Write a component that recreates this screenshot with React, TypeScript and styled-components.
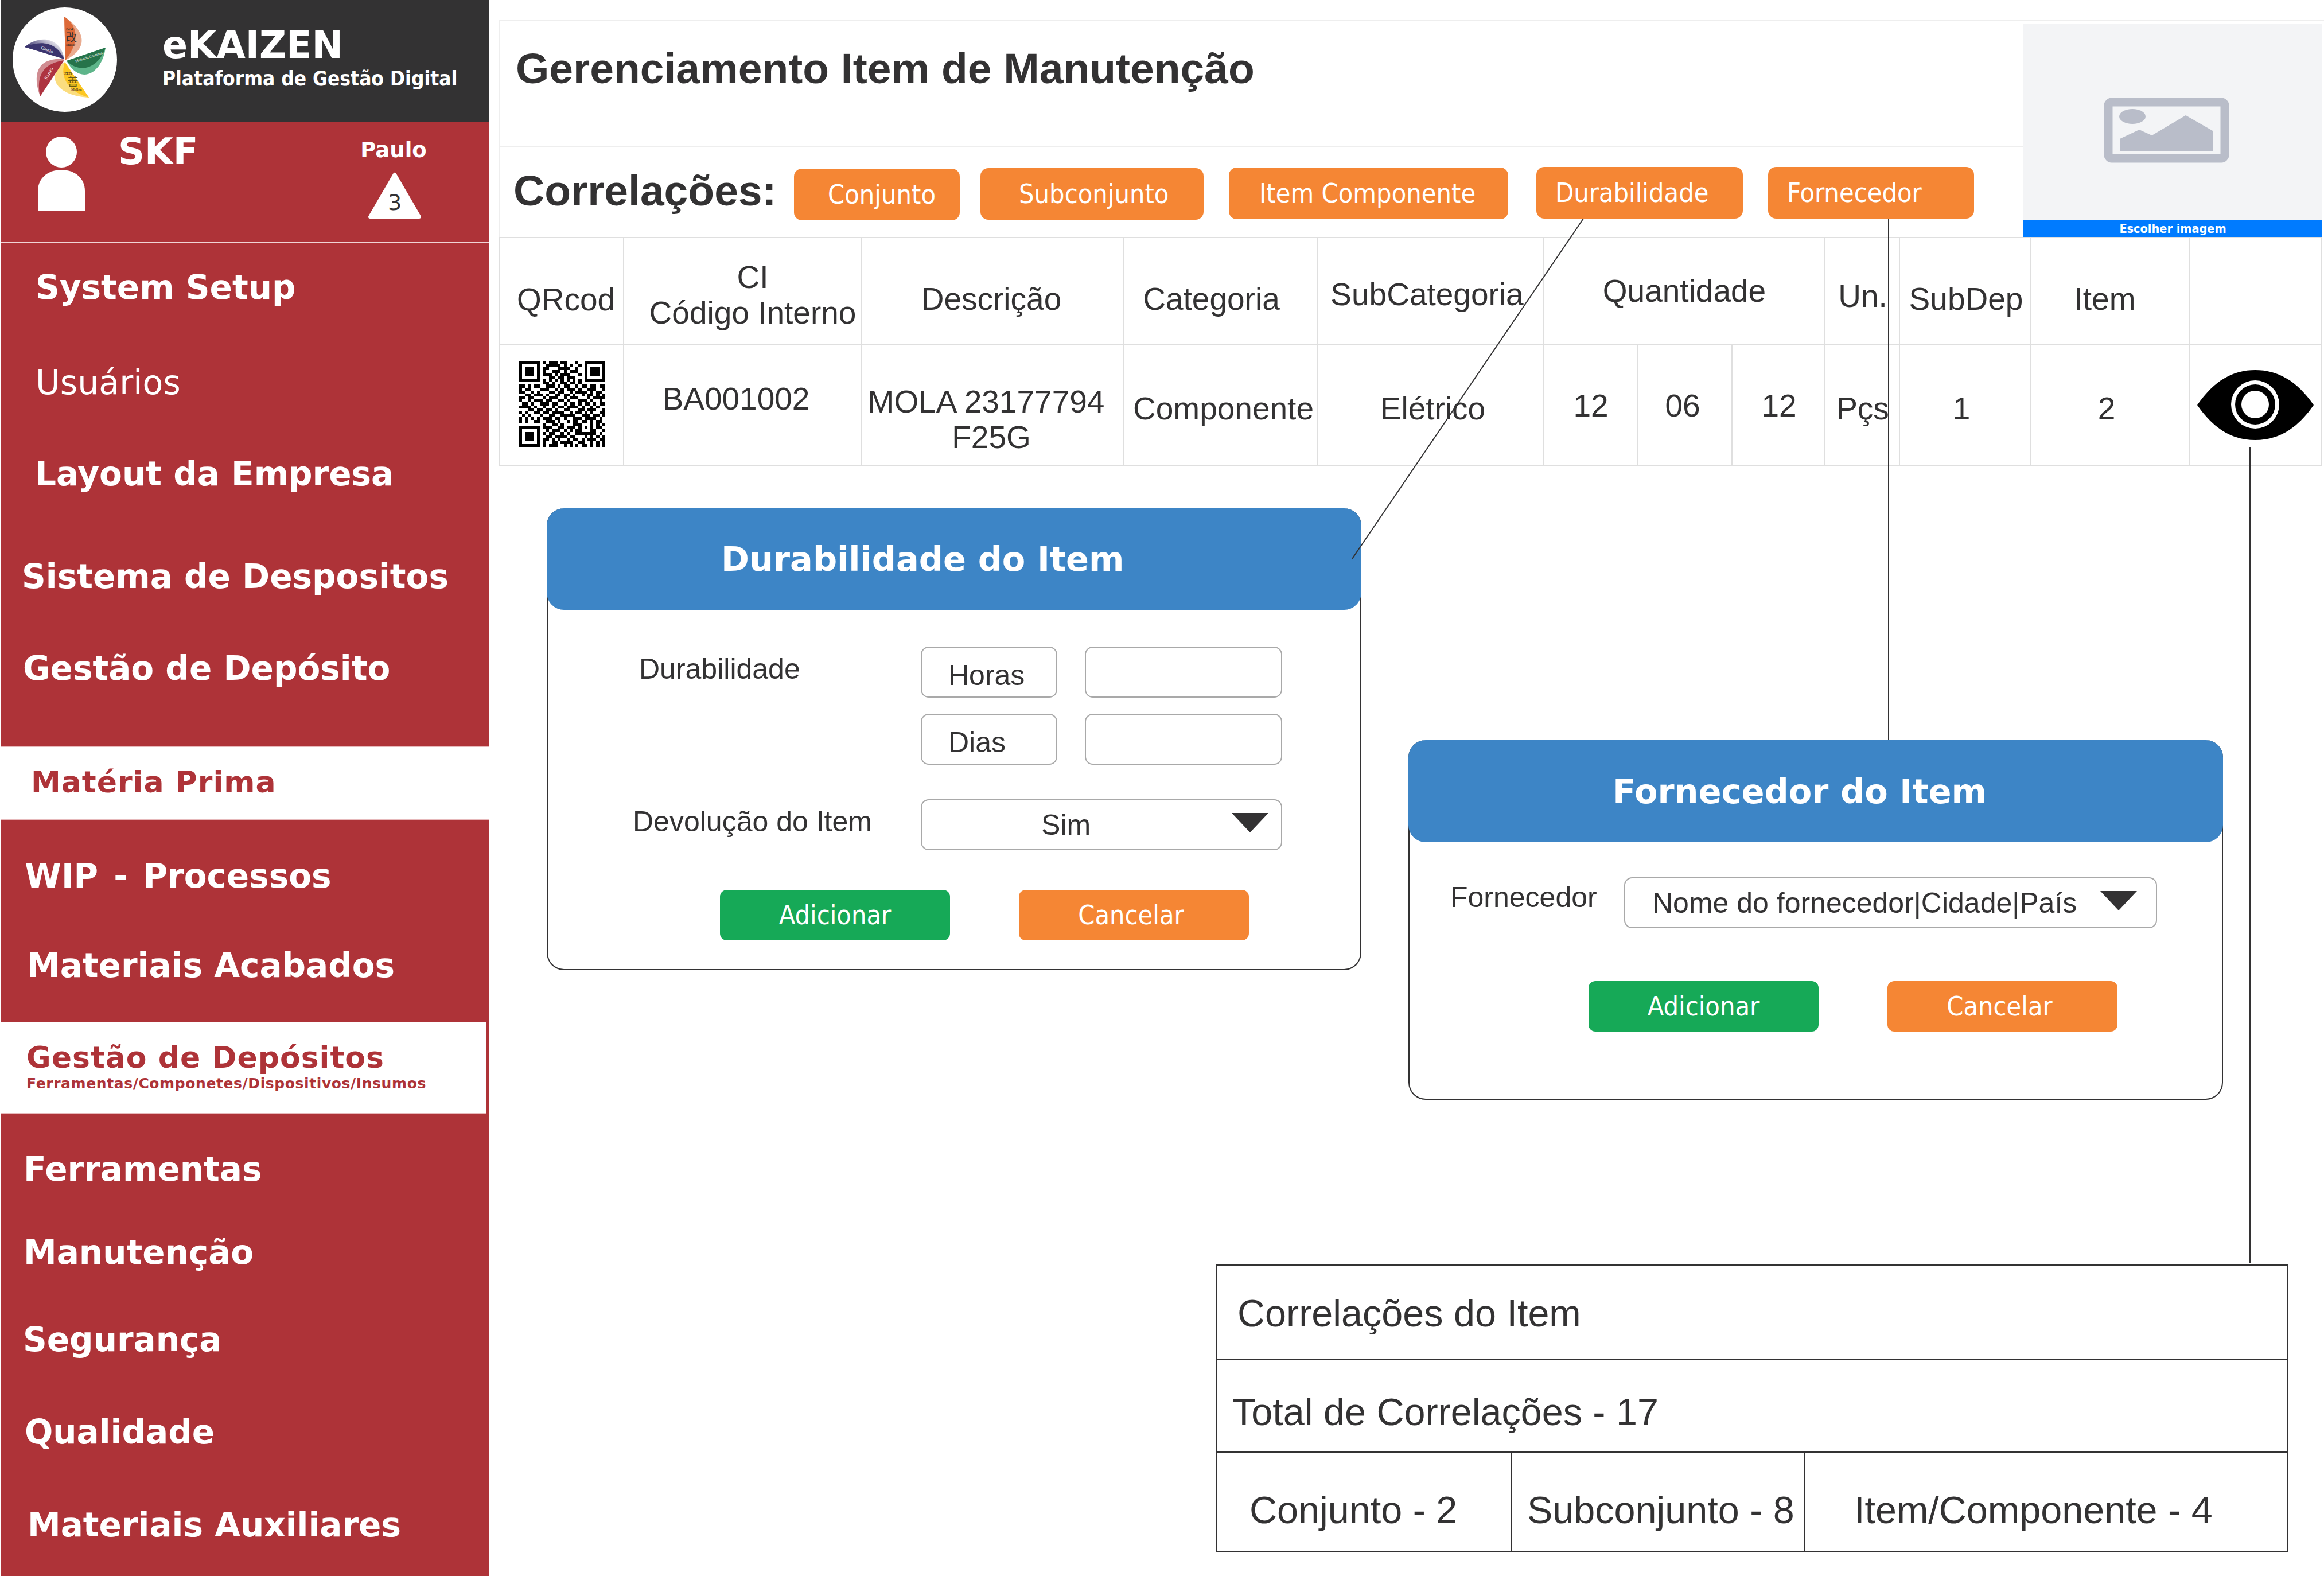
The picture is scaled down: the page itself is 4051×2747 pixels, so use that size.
import React from "react";
import styled, { createGlobalStyle } from "styled-components";

const SANS = `"Liberation Sans", Arial, sans-serif`;
const WIDE = `"DejaVu Sans", Verdana, sans-serif`;
const NARROW = `"DejaVu Sans Condensed", "DejaVu Sans", Tahoma, sans-serif`;
const RED = "#ae3338";
const INK = "#333233";
const ORANGE = "#f58634";
const GREEN = "#16a957";
const BLUE = "#3d85c6";
const GRID = "#dfdfdf";

const Global = createGlobalStyle`
  html, body { margin: 0; padding: 0; background: #fff; }
  body { width: 4051px; height: 2747px; overflow: hidden; font-family: ${SANS}; color: ${INK}; }
  * { box-sizing: border-box; }
`;

const Page = styled.div`
  display: flex;
  width: 4051px;
  height: 2747px;
  overflow: hidden;
`;

/* ---------- sidebar ---------- */
const Sidebar = styled.aside`
  flex: 0 0 851px;
  margin-left: 2px;
  height: 2747px;
  background: ${RED};
  border-right: 1px solid #e0a5a7;
  display: flex;
  flex-direction: column;
  overflow: hidden;
`;
const Brand = styled.header`
  height: 212px;
  flex: none;
  background: ${INK};
  display: flex;
  align-items: flex-start;
`;
const BrandText = styled.div`
  margin-left: 73px;
  padding-top: 40px;
  color: #fff;
  font-family: ${WIDE};
  font-weight: 700;
`;
const BrandName = styled.div`
  font-size: 65px;
  line-height: 78px;
`;
const BrandTag = styled.div`
  font-family: ${NARROW};
  font-size: 35px;
  line-height: 44px;
  margin-top: -3px;
  white-space: nowrap;
`;
const UserBar = styled.section`
  height: 212px;
  flex: none;
  display: flex;
  border-bottom: 3px solid #f0d4d5;
  color: #fff;
  font-family: ${WIDE};
  font-weight: 700;
`;
const Company = styled.div`
  font-size: 64px;
  line-height: 64px;
  margin: 20px 0 0 58px;
  width: 422px;
`;
const Operator = styled.div`
  width: 116px;
  text-align: center;
  padding-top: 26px;
  font-size: 37px;
  line-height: 48px;
  display: flex;
  flex-direction: column;
  align-items: center;
`;
const Level = styled.svg`
  width: 96px;
  height: 84px;
  margin: 14px 0 0 4px;
  display: block;
  flex: none;
`;
const Avatar = styled.svg`
  width: 82px;
  height: 130px;
  margin: 26px 0 0 64px;
  flex: none;
`;
const NavRow = styled.div<{ $h: number; $x: number; $ws?: number }>`
  flex: none;
  height: ${(p) => p.$h}px;
  padding: 4px 0 0 ${(p) => p.$x}px;
  display: flex;
  align-items: center;
  color: #fff;
  font-family: ${WIDE};
  font-weight: 700;
  font-size: 58px;
  word-spacing: ${(p) => p.$ws ?? 0}px;
  white-space: pre;
`;
const NavPlain = styled(NavRow)`
  padding-top: 0;
  font-weight: 400;
  font-size: 58.5px;
`;
const ActiveBand = styled.div<{ $top: number; $h: number; $x: number; $inset?: number }>`
  flex: none;
  margin-top: ${(p) => p.$top}px;
  margin-right: ${(p) => p.$inset ?? 0}px;
  height: ${(p) => p.$h}px;
  padding: 0 0 4px ${(p) => p.$x}px;
  background: #fff;
  border-top: 1px solid #e7b9bb;
  border-bottom: 1px solid #e7b9bb;
  color: ${RED};
  font-family: ${WIDE};
  font-weight: 700;
  display: flex;
  flex-direction: column;
  justify-content: center;
  white-space: nowrap;
`;
const BandTitle = styled.div`
  font-size: 52px;
  line-height: 58px;
  letter-spacing: 1px;
`;
const BandSub = styled.div`
  font-size: 25px;
  line-height: 30px;
  letter-spacing: 0.6px;
  margin-top: 2px;
`;

/* ---------- main ---------- */
const Main = styled.main`
  position: relative;
  flex: 1;
  margin-left: 16px;
  min-width: 0;
`;
const TopArea = styled.div`
  margin-top: 34px;
  border-top: 2px solid #eeeeee;
  height: 379px;
  display: flex;
`;
const TopLeft = styled.div`
  flex: 0 0 2657px;
  display: flex;
  flex-direction: column;
  border-left: 2px solid #eeeeee;
`;
const TitleBar = styled.div`
  height: 221px;
  border-bottom: 2px solid #eeeeee;
  padding: 44px 0 0 28px;
`;
const Title = styled.h1`
  margin: 0;
  font-family: ${SANS};
  font-weight: 700;
  font-size: 75px;
  line-height: 78px;
  color: ${INK};
  white-space: nowrap;
`;
const CorrBar = styled.div`
  flex: 1;
  display: flex;
  align-items: flex-start;
`;
const CorrLabel = styled.div`
  font-family: ${SANS};
  font-weight: 700;
  font-size: 75px;
  line-height: 78px;
  margin: 36px 0 0 24px;
  width: 489px;
  white-space: nowrap;
`;
const CorrButton = styled.div<{ $w: number; $ml: number; $pl: number; $top: number }>`
  width: ${(p) => p.$w}px;
  height: 90px;
  margin-left: ${(p) => p.$ml}px;
  margin-top: ${(p) => p.$top}px;
  padding-left: ${(p) => p.$pl}px;
  background: ${ORANGE};
  border-radius: 14px;
  color: #fff;
  font-family: ${NARROW};
  font-size: 46.5px;
  display: flex;
  align-items: center;
  white-space: nowrap;
`;
const Picker = styled.div`
  width: 522px;
  height: 372px;
  margin-top: 5px;
  display: flex;
  flex-direction: column;
  background: #f3f4f6;
  border-left: 1px solid #dcdcdc;
`;
const PickerPreview = styled.div`
  flex: 1;
  display: flex;
  align-items: center;
  justify-content: center;
  padding-top: 28px;
`;
const PickerIcon = styled.svg`
  width: 219px;
  height: 114px;
  margin-left: -22px;
`;
const PickerBtn = styled.div`
  height: 29px;
  background: #007bff;
  color: #fff;
  font-family: ${NARROW};
  font-weight: 700;
  font-size: 21.5px;
  line-height: 29px;
  text-align: center;
`;

const DataTable = styled.table`
  width: 3176px;
  table-layout: fixed;
  border-collapse: collapse;
  font-family: ${SANS};
  font-size: 55px;
  color: ${INK};
  border-top: 2px solid ${GRID};
  border-bottom: 2px solid ${GRID};
`;
const Cell = styled.td<{ $dx?: number; $dy?: number }>`
  border: 2px solid ${GRID};
  padding: ${(p) => Math.max(p.$dy ?? 0, 0) * 2}px ${(p) => Math.max(-(p.$dx ?? 0), 0) * 2}px
    ${(p) => Math.max(-(p.$dy ?? 0), 0) * 2}px ${(p) => Math.max(p.$dx ?? 0, 0) * 2}px;
  text-align: center;
  vertical-align: middle;
  line-height: 62px;
  white-space: nowrap;
  overflow: visible;
`;
const HeadRow = styled.tr`
  height: 186px;
`;
const BodyRow = styled.tr`
  height: 212px;
`;
const ShiftedLine = styled.span`
  display: inline-block;
  padding-right: 18px;
`;
const QrSvg = styled.svg`
  display: block;
  width: 150px;
  height: 150px;
  margin-left: 34px;
  shape-rendering: crispEdges;
`;
const EyeSvg = styled.svg`
  display: block;
  width: 203px;
  height: 122px;
  margin-left: 12px;
`;

/* ---------- dialogs ---------- */
const DialogRow = styled.div`
  display: flex;
  align-items: flex-start;
  gap: 82px;
  margin: 73px 0 0 84px;
`;
const Dialog = styled.section<{ $h: number; $top?: number }>`
  position: relative;
  z-index: 1;
  flex: none;
  width: 1420px;
  height: ${(p) => p.$h}px;
  margin-top: ${(p) => p.$top ?? 0}px;
  border: 2px solid ${INK};
  border-top: 0;
  border-radius: 30px;
  background: #fff;
`;
const DialogHead = styled.div<{ $h: number; $x: number }>`
  height: ${(p) => p.$h}px;
  margin: 0 -2px;
  padding-left: ${(p) => p.$x}px;
  background: ${BLUE};
  border-radius: 30px;
  color: #fff;
  font-family: ${WIDE};
  font-weight: 700;
  font-size: 59px;
  display: flex;
  align-items: center;
  white-space: nowrap;
`;
const FormRow = styled.div<{ $top: number }>`
  display: flex;
  margin-top: ${(p) => p.$top}px;
`;
const FieldLabel = styled.div<{ $w: number; $x: number; $dy?: number }>`
  width: ${(p) => p.$w}px;
  padding-left: ${(p) => p.$x}px;
  padding-top: ${(p) => p.$dy ?? 10}px;
  font-size: 50px;
  line-height: 58px;
  white-space: nowrap;
`;
const Box = styled.div<{ $w: number; $ml?: number; $pl?: number; $low?: number }>`
  width: ${(p) => p.$w}px;
  height: 89px;
  margin-left: ${(p) => p.$ml ?? 0}px;
  padding-left: ${(p) => p.$pl ?? 0}px;
  padding-top: ${(p) => p.$low ?? 0}px;
  border: 2px solid #a9a9a9;
  border-radius: 14px;
  font-size: 50px;
  display: flex;
  align-items: center;
  white-space: nowrap;
`;
const SelectText = styled.span`
  flex: 1;
`;
const Caret = styled.svg<{ $mr: number }>`
  width: 64px;
  height: 34px;
  flex: none;
  margin: -8px ${(p) => p.$mr}px 0 0;
`;
const ActionRow = styled.div<{ $top: number; $x: number }>`
  display: flex;
  gap: 120px;
  margin-top: ${(p) => p.$top}px;
  padding-left: ${(p) => p.$x}px;
`;
const Action = styled.div<{ $c: string; $h: number; $back?: number }>`
  width: 401px;
  height: ${(p) => p.$h}px;
  padding-right: ${(p) => p.$back ?? 0}px;
  background: ${(p) => p.$c};
  border-radius: 12px;
  color: #fff;
  font-family: ${NARROW};
  font-size: 46.5px;
  display: flex;
  align-items: center;
  justify-content: center;
`;

/* ---------- summary ---------- */
const Summary = styled.section`
  width: 1870px;
  height: 502px;
  margin: 287px 0 0 1250px;
  border: 2px solid ${INK};
  display: grid;
  grid-template-rows: 165px 161px 1fr;
  font-size: 66.5px;
  position: relative;
  z-index: 1;
  background: #fff;
`;
const SummaryRow = styled.div<{ $x: number; $dy?: number }>`
  border-bottom: 3px solid ${INK};
  padding-left: ${(p) => p.$x}px;
  padding-top: ${(p) => p.$dy ?? 0}px;
  display: flex;
  align-items: center;
  white-space: nowrap;
`;
const SummaryCols = styled.div`
  display: grid;
  grid-template-columns: 514px 512px 1fr;
  border-bottom: 3px solid ${INK};
  margin-bottom: -2px;
`;
const SummaryCell = styled.div<{ $x: number }>`
  padding: 28px 0 0 ${(p) => p.$x}px;
  display: flex;
  align-items: center;
  white-space: nowrap;
  border-right: 2px solid ${INK};
  &:last-child { border-right: 0; }
`;
const Wires = styled.svg`
  position: absolute;
  left: -869px;
  top: 0;
  width: 4051px;
  height: 2747px;
  pointer-events: none;
  z-index: 2;
`;

/* ---------- drawings ---------- */
const LogoSvg = styled.svg`
  flex: none;
  width: 208px;
  height: 208px;
`;

function Logo() {
  const serif = `"Liberation Serif", serif`;
  return (
    <LogoSvg viewBox="0 0 208 208">
      <defs>
        <linearGradient id="navyFade" x1="0" y1="1" x2="1" y2="0.3">
          <stop offset="0.35" stopColor="#3b356e" />
          <stop offset="1" stopColor="#ffffff" />
        </linearGradient>
      </defs>
      <g transform="translate(-2 0)">
        <circle cx="113" cy="104" r="91" fill="#fff" />
        <path d="M112 29C146 52 158 82 114 105Z" fill="#e9ab8f" />
        <path d="M112 29C132 42 143 68 114 105Z" fill="#dd6a39" />
        <path d="M184 83C178 128 140 150 116 106Z" fill="#5eb58a" />
        <path d="M184 83C172 118 140 130 116 106Z" fill="#26734a" />
        <path d="M155 170C108 168 74 140 112 108Z" fill="#fbdd7f" />
        <path d="M155 170C126 162 102 140 113 108Z" fill="#fdc722" />
        <path d="M70 168C56 130 64 100 111 103Z" fill="#d08c91" />
        <path d="M70 168C62 132 76 110 112 105Z" fill="#ae3340" />
        <path d="M43 82C66 62 104 62 112 102Z" fill="url(#navyFade)" />
        <path d="M43 82C70 70 98 72 112 103Z" fill="#3b356e" />
        <text x="115" y="52" fontSize="7" fontFamily={serif} fill="#222">KAI</text>
        <text x="115" y="80" fontSize="6" fontFamily={serif} fill="#222">Mudar</text>
        <text x="115" y="72" fontSize="19" fontFamily={`"Noto Sans CJK SC", sans-serif`} fill="#333">改</text>
        <text x="71" y="85" fontSize="8" fontFamily={serif} fill="#fff" transform="rotate(22 71 85)">Gestão</text>
        <text x="132" y="109" fontSize="6.5" fontFamily={serif} fill="#fff" transform="rotate(-18 132 109)">Melhoria Contínua</text>
        <text x="82" y="139" fontSize="8" fontFamily={serif} fill="#fff" transform="rotate(-62 82 139)">Kaizen</text>
        <text x="112" y="130" fontSize="7" fontFamily={serif} fill="#222">ZEN</text>
        <text x="124" y="158" fontSize="6.5" fontFamily={serif} fill="#222">Melhor</text>
        <text x="117" y="150" fontSize="20" fontFamily={`"Noto Sans CJK SC", sans-serif`} fill="#6b5a10">善</text>
      </g>
    </LogoSvg>
  );
}

const QR_ROWS = [
  "11111110101110110001001111111",
  "10000010011111010100101000001",
  "10111010110001111001001011101",
  "10111010100111010111001011101",
  "10111010111010111000101011101",
  "10000010001101101110001000001",
  "11111110101010101010101111111",
  "00000000110100110110100000000",
  "11010110011101011001011011011",
  "10110001110010101110100111001",
  "11001010001101100101111010110",
  "00110111010011011010010110101",
  "11011000101110010111000101111",
  "10010111011001101000111010010",
  "01101001110110010110101101011",
  "11110100100101101111010010100",
  "00011011011010011000110111001",
  "10100110110111100101101010011",
  "01010001001100111110011101101",
  "10101010111011010011101111010",
  "10100110011101001011011010110",
  "00000000100110100011100010101",
  "11111110111001101110101010110",
  "10000010010111010101100011001",
  "10111010101100101001111111010",
  "10111010011011110110001010101",
  "10111010110101001011010111011",
  "10000010100110111100110010101",
  "11111110101110010101011010101",
];

function Qr() {
  return (
    <QrSvg viewBox="0 0 29 29">
      {QR_ROWS.flatMap((row, y) =>
        row.split("").map((c, x) => (c === "1" ? <rect key={`${x}-${y}`} x={x} y={y} width="1" height="1" fill="#000" /> : null))
      )}
    </QrSvg>
  );
}

function Eye() {
  return (
    <EyeSvg viewBox="0 0 203 122">
      <path d="M0 61C30 18 62 0 101 0C140 0 173 18 203 61C173 104 140 122 101 122C62 122 30 104 0 61Z" fill="#000" />
      <circle cx="101" cy="60" r="42" fill="#fff" />
      <circle cx="101" cy="60" r="35" fill="#000" />
      <circle cx="101" cy="60" r="24" fill="#fff" />
    </EyeSvg>
  );
}

const NavA = [
  { t: "Usuários", h: 186, x: 60, plain: true },
  { t: "Layout da Empresa", h: 128, x: 59 },
  { t: "Sistema de Despositos", h: 230, x: 36 },
  { t: "Gestão de Depósito", h: 90, x: 38 },
];
const NavC = [
  { t: "Ferramentas", h: 190, x: 39 },
  { t: "Manutenção", h: 100, x: 39 },
  { t: "Segurança", h: 204, x: 38 },
  { t: "Qualidade", h: 118, x: 41 },
  { t: "Materiais Auxiliares", h: 206, x: 46 },
];

const COLS = [217, 414, 458, 337, 395, 164, 164, 162, 130, 228, 278, 229];

export default function App() {
  return (
    <>
      <Global />
      <Page>
        <Sidebar>
          <Brand>
            <Logo />
            <BrandText>
              <BrandName>eKAIZEN</BrandName>
              <BrandTag>Plataforma de Gestão Digital</BrandTag>
            </BrandText>
          </Brand>
          <UserBar>
            <Avatar viewBox="0 0 82 130">
              <ellipse cx="41" cy="27" rx="27" ry="27" fill="#fff" />
              <path d="M0 130V95C0 72 18 58 41 58C64 58 82 72 82 95V130Z" fill="#fff" />
            </Avatar>
            <Company>SKF</Company>
            <Operator>
              Paulo
              <Level viewBox="0 0 96 84">
                <path d="M48 4L91 78H5Z" fill="#fff" stroke="#fff" strokeWidth="6" strokeLinejoin="round" />
                <text x="48" y="66" textAnchor="middle" fontSize="38" fontWeight="400" fontFamily={WIDE} fill={INK}>3</text>
              </Level>
            </Operator>
          </UserBar>
          <NavRow $h={150} $x={60}>System Setup</NavRow>
          {NavA.map((n) =>
            n.plain ? (
              <NavPlain key={n.t} $h={n.h} $x={n.x}>{n.t}</NavPlain>
            ) : (
              <NavRow key={n.t} $h={n.h} $x={n.x}>{n.t}</NavRow>
            )
          )}
          <ActiveBand $top={93} $h={128} $x={52}>
            <BandTitle>Matéria Prima</BandTitle>
          </ActiveBand>
          <NavRow $h={192} $x={41} $ws={7}>WIP - Processos</NavRow>
          <NavRow $h={120} $x={45}>Materiais Acabados</NavRow>
          <ActiveBand $top={40} $h={160} $x={44} $inset={5}>
            <BandTitle>Gestão de Depósitos</BandTitle>
            <BandSub>Ferramentas/Componetes/Dispositivos/Insumos</BandSub>
          </ActiveBand>
          {NavC.map((n) => (
            <NavRow key={n.t} $h={n.h} $x={n.x}>{n.t}</NavRow>
          ))}
        </Sidebar>

        <Main>
          <TopArea>
            <TopLeft>
              <TitleBar>
                <Title>Gerenciamento Item de Manutenção</Title>
              </TitleBar>
              <CorrBar>
                <CorrLabel>Correlações:</CorrLabel>
                <CorrButton $w={289} $ml={0} $pl={59} $top={37}>Conjunto</CorrButton>
                <CorrButton $w={389} $ml={36} $pl={67} $top={36}>Subconjunto</CorrButton>
                <CorrButton $w={487} $ml={44} $pl={53} $top={35}>Item Componente</CorrButton>
                <CorrButton $w={360} $ml={49} $pl={33} $top={34}>Durabilidade</CorrButton>
                <CorrButton $w={359} $ml={44} $pl={33} $top={34}>Fornecedor</CorrButton>
              </CorrBar>
            </TopLeft>
            <Picker>
              <PickerPreview>
                <PickerIcon viewBox="0 0 219 114">
                  <rect x="8" y="8" width="203" height="98" rx="6" fill="none" stroke="#b9bdc9" strokeWidth="15" />
                  <ellipse cx="50" cy="33" rx="23" ry="13" fill="#b9bdc9" />
                  <path d="M28 94V72L62 56L84 66L143 31L190 58V94Z" fill="#b9bdc9" />
                </PickerIcon>
              </PickerPreview>
              <PickerBtn>Escolher imagem</PickerBtn>
            </Picker>
          </TopArea>

          <DataTable>
            <colgroup>
              {COLS.map((w, i) => (
                <col key={i} style={{ width: w }} />
              ))}
            </colgroup>
            <tbody>
              <HeadRow>
                <Cell $dx={8} $dy={15}>QRcod</Cell>
                <Cell $dx={18} $dy={7}>CI<br />Código Interno</Cell>
                <Cell $dx={-2} $dy={14}>Descrição</Cell>
                <Cell $dx={-16} $dy={14}>Categoria</Cell>
                <Cell $dx={-6} $dy={6}>SubCategoria</Cell>
                <Cell colSpan={3}>Quantidade</Cell>
                <Cell $dx={1} $dy={9}>Un.</Cell>
                <Cell $dx={2} $dy={14}>SubDep</Cell>
                <Cell $dx={-9} $dy={14}>Item</Cell>
                <Cell />
              </HeadRow>
              <BodyRow>
                <Cell $dy={-2}><Qr /></Cell>
                <Cell $dx={-11} $dy={-11}>BA001002</Cell>
                <Cell $dx={-2} $dy={25}><ShiftedLine>MOLA 23177794</ShiftedLine><br />F25G</Cell>
                <Cell $dx={5} $dy={6}>Componente</Cell>
                <Cell $dx={4} $dy={6}>Elétrico</Cell>
                <Cell $dy={1}>12</Cell>
                <Cell $dx={-4} $dy={1}>06</Cell>
                <Cell $dx={1} $dy={1}>12</Cell>
                <Cell $dx={1} $dy={6}>Pçs</Cell>
                <Cell $dx={-6} $dy={6}>1</Cell>
                <Cell $dx={-6} $dy={6}>2</Cell>
                <Cell><Eye /></Cell>
              </BodyRow>
            </tbody>
          </DataTable>

          <DialogRow>
            <Dialog $h={805}>
              <DialogHead $h={177} $x={304}>Durabilidade do Item</DialogHead>
              <FormRow $top={64}>
                <FieldLabel $w={650} $x={159}>Durabilidade</FieldLabel>
                <Box $w={238} $pl={46} $low={10}>Horas</Box>
                <Box $w={344} $ml={48} />
              </FormRow>
              <FormRow $top={28}>
                <FieldLabel $w={650} $x={159} />
                <Box $w={238} $pl={46} $low={10}>Dias</Box>
                <Box $w={344} $ml={48} />
              </FormRow>
              <FormRow $top={60}>
                <FieldLabel $w={650} $x={148} $dy={10}>Devolução do Item</FieldLabel>
                <Box $w={630} $pl={208}>
                  <SelectText>Sim</SelectText>
                  <Caret $mr={22} viewBox="0 0 64 34"><path d="M0 0H64L32 34Z" fill={INK} /></Caret>
                </Box>
              </FormRow>
              <ActionRow $top={69} $x={300}>
                <Action $c={GREEN} $h={88}>Adicionar</Action>
                <Action $c={ORANGE} $h={88} $back={10}>Cancelar</Action>
              </ActionRow>
            </Dialog>
            <Dialog $h={627} $top={404}>
              <DialogHead $h={178} $x={356}>Fornecedor do Item</DialogHead>
              <FormRow $top={61}>
                <FieldLabel $w={374} $x={71} $dy={6}>Fornecedor</FieldLabel>
                <Box $w={929} $pl={47}>
                  <SelectText>Nome do fornecedor|Cidade|País</SelectText>
                  <Caret $mr={33} viewBox="0 0 64 34"><path d="M0 0H64L32 34Z" fill={INK} /></Caret>
                </Box>
              </FormRow>
              <ActionRow $top={92} $x={312}>
                <Action $c={GREEN} $h={88}>Adicionar</Action>
                <Action $c={ORANGE} $h={88} $back={10}>Cancelar</Action>
              </ActionRow>
            </Dialog>
          </DialogRow>

          <Summary>
            <SummaryRow $x={36} $dy={4}>Correlações do Item</SummaryRow>
            <SummaryRow $x={27} $dy={22}>Total de Correlações - 17</SummaryRow>
            <SummaryCols>
              <SummaryCell $x={57}>Conjunto - 2</SummaryCell>
              <SummaryCell $x={27}>Subconjunto - 8</SummaryCell>
              <SummaryCell $x={85}>Item/Componente - 4</SummaryCell>
            </SummaryCols>
          </Summary>

          <Wires viewBox="0 0 4051 2747">
            <path d="M2760 381L2357 974" stroke={INK} strokeWidth="2" fill="none" />
            <path d="M3292 381V1290" stroke={INK} strokeWidth="2" fill="none" />
            <path d="M3922 779V2202" stroke={INK} strokeWidth="2" fill="none" />
          </Wires>
        </Main>
      </Page>
    </>
  );
}
